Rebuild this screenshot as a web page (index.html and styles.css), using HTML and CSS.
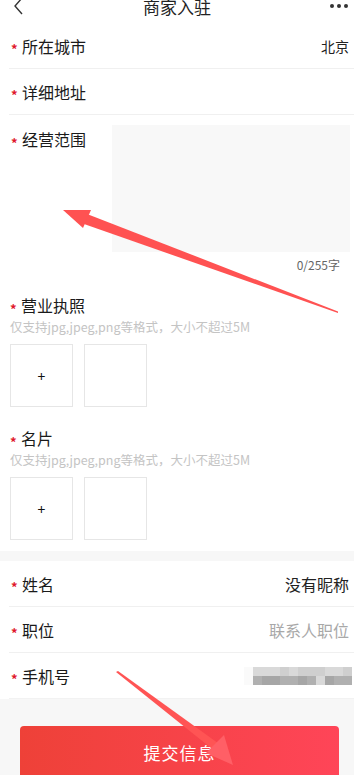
FILE: index.html
```html
<!DOCTYPE html>
<html lang="zh-CN">
<head>
    <meta charset="UTF-8">
    <meta name="viewport" content="width=device-width, initial-scale=1.0">
    <title>商家入驻</title>
    <link rel="stylesheet" href="styles.css">
</head>
<body>
    <header class="nav-bar">
        <svg class="nav-back" width="11" height="18" viewBox="0 0 11 18">
            <path d="M9 1 L2 9 L9 17" fill="none" stroke="#333" stroke-width="1.4"/>
        </svg>
        <h1>商家入驻</h1>
        <div class="nav-more"><i></i><i></i><i></i></div>
    </header>

    <!-- 店铺信息 -->
    <section class="block">
        <div class="row">
            <span class="label"><em>*</em>所在城市</span>
            <span class="value small">北京</span>
        </div>
        <div class="row">
            <span class="label"><em>*</em>详细地址</span>
        </div>
        <div class="scope">
            <div class="scope-top">
                <span class="label"><em>*</em>经营范围</span>
                <div class="scope-input"></div>
            </div>
            <div class="counter">0/255字</div>
        </div>

        <div class="upload">
            <span class="label"><em>*</em>营业执照</span>
            <p class="hint">仅支持jpg,jpeg,png等格式，大小不超过5M</p>
            <div class="pics">
                <div class="pic">+</div>
                <div class="pic"></div>
            </div>
        </div>
        <div class="upload">
            <span class="label"><em>*</em>名片</span>
            <p class="hint">仅支持jpg,jpeg,png等格式，大小不超过5M</p>
            <div class="pics">
                <div class="pic">+</div>
                <div class="pic"></div>
            </div>
        </div>
    </section>

    <!-- 联系人 -->
    <section class="block contact">
        <div class="row">
            <span class="label"><em>*</em>姓名</span>
            <span class="value">没有昵称</span>
        </div>
        <div class="row">
            <span class="label"><em>*</em>职位</span>
            <span class="value placeholder">联系人职位</span>
        </div>
        <div class="row">
            <span class="label"><em>*</em>手机号</span>
            <span class="mosaic">
                <i class="m0"></i><i class="m2"></i><i class="m2"></i><i class="m2"></i><i class="m1"></i><i class="m2"></i><i class="m1"></i><i class="m1"></i><i class="m1"></i><i class="m2"></i><i class="m2"></i><i class="m1"></i>
                <i class="m0"></i><i class="m3"></i><i class="m4"></i><i class="m4"></i><i class="m3"></i><i class="m3"></i><i class="m4"></i><i class="m3"></i><i class="m2"></i><i class="m4"></i><i class="m3"></i><i class="m3"></i>
            </span>
        </div>
    </section>

    <div class="footer">
        <button class="submit">提交信息</button>
    </div>

    <!-- 标注箭头 -->
    <svg class="marks" width="354" height="775" viewBox="0 0 354 775">
        <polygon points="338,311.5 338,313 84,224 87,214" fill="#ff5252"/>
        <polygon points="63,210 91,210 83,228" fill="#ff5252"/>
        <polygon points="116,672 118,671 222,746 216,752" fill="#ff5454"/>
        <polygon points="233,765 206,753 224,735" fill="#ff5f66"/>
    </svg>
</body>
</html>
```

FILE: styles.css
```css
* {
    box-sizing: border-box;
    margin: 0;
    padding: 0;
}

body {
    font-family: "Noto Sans CJK SC", "Noto Sans", sans-serif;
    color: #222;
    background-color: #f7f7f7;
    width: 354px;
    height: 775px;
    overflow: hidden;
    position: relative;
}

/* 顶部导航 */
.nav-bar {
    height: 34px;
    margin-top: -11px;
    background-color: #fff;
    display: flex;
    align-items: center;
    justify-content: space-between;
    padding: 0 5px 0 13px;
}

.nav-bar h1 {
    font-size: 17px;
    font-weight: normal;
    color: #222;
}

.nav-back {
    display: block;
}

.nav-more {
    display: flex;
    gap: 3px;
    width: 19px;
}

.nav-more i {
    width: 4px;
    height: 4px;
    border-radius: 50%;
    background-color: #333;
}

.block {
    background-color: #fff;
}

.row {
    height: 46px;
    margin-left: 9px;
    padding-right: 5px;
    border-bottom: 1px solid #f0f0f0;
    display: flex;
    align-items: center;
    justify-content: space-between;
}

.label {
    font-size: 16px;
    line-height: 22px;
    height: 22px;
    color: #1a1a1a;
    display: flex;
    align-items: center;
    padding-left: 2px;
}

.label em {
    font-style: normal;
    font-weight: bold;
    color: #e0182b;
    font-size: 13px;
    line-height: 13px;
    width: 11px;
    margin-top: 6px;
}

.value {
    font-size: 16px;
    color: #222;
}

.value.small {
    font-size: 14px;
}

.value.placeholder {
    color: #a8a8a8;
}

/* 经营范围 */
.scope {
    padding: 10px 4px 0 9px;
}

.scope-top {
    display: flex;
    justify-content: space-between;
}

.scope-top .label {
    margin-top: 3px;
    align-self: flex-start;
}

.scope-input {
    width: 238px;
    height: 127px;
    background-color: #f8f8f8;
}

.counter {
    margin-top: 4px;
    line-height: 18px;
    font-size: 12px;
    color: #666;
    text-align: right;
    padding-right: 10px;
}

/* 上传 */
.upload {
    padding: 20px 0 0 8px;
}

.upload:last-child {
    padding-bottom: 11px;
}

.hint {
    font-size: 12.5px;
    line-height: 18px;
    color: #c4c4c4;
    margin: 2px 0 0 2px;
}

.pics {
    display: flex;
    gap: 11px;
    margin: 8px 0 0 2px;
}

.pic {
    width: 63px;
    height: 63px;
    border: 1px solid #e6e6e6;
    display: flex;
    align-items: center;
    justify-content: center;
    font-size: 14px;
    color: #111;
}

/* 联系人 */
.contact {
    margin-top: 10px;
}

.contact .row:last-child {
    border-bottom-color: #f2f2f2;
}

.mosaic {
    display: grid;
    grid-template-columns: repeat(12, 9px);
    grid-auto-rows: 9px;
    margin-right: -3px;
}

.m0 { background-color: #fafafa; }
.m1 { background-color: #cfcfcf; }
.m2 { background-color: #d9d9d9; }
.m3 { background-color: #b0b0b0; }
.m4 { background-color: #a6a6a6; }

.footer {
    padding: 27px 15px 0 20px;
}

.submit {
    width: 319px;
    height: 52px;
    border: none;
    border-radius: 4px;
    background: linear-gradient(to right, #ee4138, #ff4558);
    color: #fff;
    font-family: inherit;
    font-size: 17px;
    letter-spacing: 1px;
}

/* 标注 */
.marks {
    position: absolute;
    left: 0;
    top: 0;
    pointer-events: none;
}
```
